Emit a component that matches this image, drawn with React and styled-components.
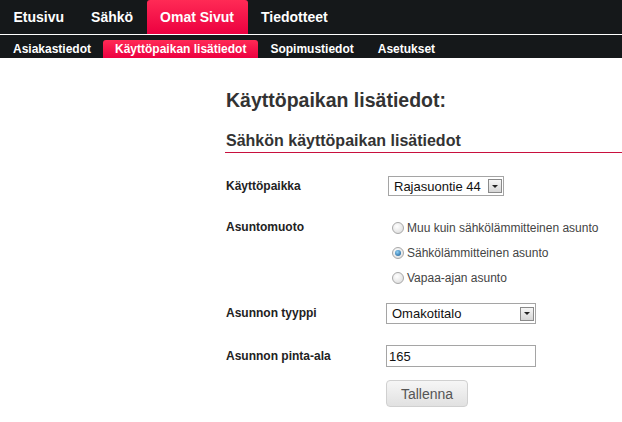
import React from "react";
import styled, { createGlobalStyle } from "styled-components";

const Global = createGlobalStyle`
  body {
    margin: 0;
    background: #fff;
    font-family: "Liberation Sans", Arial, sans-serif;
    color: #333;
  }
`;

const TopBar = styled.div`
  background: #15181a;
  height: 34px;
  display: flex;
  align-items: flex-end;
  border-bottom: 1px solid #fff;
`;

const TopItem = styled.a`
  display: flex;
  align-items: center;
  height: 34px;
  padding: 0 13.5px;
  font-size: 14px;
  font-weight: bold;
  color: #fff;
  text-decoration: none;
  border-radius: 3px 3px 0 0;
  background: ${(p) => (p.$active ? "linear-gradient(#ff2a55, #ec0040)" : "transparent")};
`;

const SubBar = styled.div`
  background: #15181a;
  height: 23px;
  display: flex;
  align-items: flex-end;
  padding-left: 1px;
`;

const SubItem = styled.a`
  display: flex;
  align-items: center;
  height: 18px;
  padding: 0 12px;
  font-size: 12px;
  font-weight: bold;
  color: #fff;
  text-decoration: none;
  border-radius: 3px 3px 0 0;
  background: ${(p) => (p.$active ? "linear-gradient(#ff2a55, #ec0040)" : "transparent")};
`;

const Main = styled.div`
  padding: 31px 0 0 225px;
`;

const Title = styled.h1`
  margin: 0 0 20px 1px;
  font-size: 19.5px;
  font-weight: bold;
  color: #333;
`;

const Section = styled.h2`
  margin: 0;
  padding: 0 0 2px 1px;
  font-size: 16px;
  font-weight: bold;
  color: #333;
  border-bottom: 1px solid #c8103e;
`;

const Form = styled.div`
  display: grid;
  grid-template-columns: 160px 1fr;
  padding: 23px 0 0 1px;
`;

const Label = styled.div`
  font-size: 12px;
  font-weight: bold;
  color: #222;
  padding-top: ${(p) => p.$top || 4}px;
  margin-bottom: ${(p) => p.$gap || 0}px;
`;

const Field = styled.div`
  margin-bottom: ${(p) => p.$gap || 0}px;
`;

const SelectWrap = styled.div`
  position: relative;
  width: ${(p) => p.$w}px;
  height: ${(p) => p.$h}px;
  margin-left: ${(p) => p.$ml || 0}px;
`;

const Select = styled.select`
  appearance: none;
  width: 100%;
  height: 100%;
  box-sizing: border-box;
  border: 1px solid #a5a5a5;
  background: #fff;
  font-family: "Liberation Sans", Arial, sans-serif;
  font-size: 13px;
  color: #111;
  padding: 0 0 0 5px;
  outline: none;
`;

const Arrow = styled.span`
  position: absolute;
  right: 2px;
  top: 50%;
  transform: translateY(-50%);
  width: 14px;
  height: 14px;
  box-sizing: border-box;
  border: 1px solid #8a8a8a;
  background: linear-gradient(#f6f6f6, #d6d6d6);
  display: flex;
  align-items: center;
  justify-content: center;
  pointer-events: none;
  &::after {
    content: "";
    border-left: 3px solid transparent;
    border-right: 3px solid transparent;
    border-top: 3px solid #222;
  }
`;

const Radios = styled.div`
  display: flex;
  flex-direction: column;
  gap: 9px;
  padding: 1px 0 0 5px;
`;

const RadioRow = styled.label`
  display: flex;
  align-items: center;
  gap: 3px;
  font-size: 12px;
  color: #444;
  height: 16px;
`;

const Radio = styled.input`
  appearance: none;
  margin: 0 0 0 1px;
  width: 12px;
  height: 12px;
  border-radius: 50%;
  border: 1px solid #a8a8a8;
  background: radial-gradient(circle at 40% 35%, #fff, #d8d8d8);
  position: relative;
  &:checked::after {
    content: "";
    position: absolute;
    left: 2px;
    top: 2px;
    width: 6px;
    height: 6px;
    border-radius: 50%;
    background: radial-gradient(circle at 40% 35%, #8fd0f5, #10548f);
  }
`;

const Input = styled.input`
  display: block;
  width: 150px;
  height: 22px;
  box-sizing: border-box;
  border: 1px solid #a5a5a5;
  font-family: "Liberation Sans", Arial, sans-serif;
  font-size: 13px;
  color: #111;
  padding: 0 2px;
  outline: none;
`;

const Button = styled.button`
  display: block;
  margin-top: 13px;
  width: 82px;
  height: 27px;
  border: 1px solid #d0d0d0;
  border-radius: 4px;
  background: linear-gradient(#f6f6f6, #e1e1e1);
  font-family: "Liberation Sans", Arial, sans-serif;
  font-size: 14px;
  color: #555;
`;

export default function App() {
  return (
    <>
      <Global />
      <TopBar>
        <TopItem>Etusivu</TopItem>
        <TopItem>Sähkö</TopItem>
        <TopItem $active>Omat Sivut</TopItem>
        <TopItem>Tiedotteet</TopItem>
      </TopBar>
      <SubBar>
        <SubItem>Asiakastiedot</SubItem>
        <SubItem $active>Käyttöpaikan lisätiedot</SubItem>
        <SubItem>Sopimustiedot</SubItem>
        <SubItem>Asetukset</SubItem>
      </SubBar>
      <Main>
        <Title>Käyttöpaikan lisätiedot:</Title>
        <Section>Sähkön käyttöpaikan lisätiedot</Section>
        <Form>
          <Label $top={3} $gap={25}>Käyttöpaikka</Label>
          <Field $gap={23}>
            <SelectWrap $w={116} $h={20} $ml={2}>
              <Select defaultValue="r">
                <option value="r">Rajasuontie 44</option>
              </Select>
              <Arrow />
            </SelectWrap>
          </Field>
          <Label $top={1}>Asuntomuoto</Label>
          <Field $gap={17}>
            <Radios>
              <RadioRow><Radio type="radio" name="a" />Muu kuin sähkölämmitteinen asunto</RadioRow>
              <RadioRow><Radio type="radio" name="a" defaultChecked />Sähkölämmitteinen asunto</RadioRow>
              <RadioRow><Radio type="radio" name="a" />Vapaa-ajan asunto</RadioRow>
            </Radios>
          </Field>
          <Label $top={3}>Asunnon tyyppi</Label>
          <Field $gap={21}>
            <SelectWrap $w={150} $h={21}>
              <Select defaultValue="o">
                <option value="o">Omakotitalo</option>
              </Select>
              <Arrow />
            </SelectWrap>
          </Field>
          <Label $top={4}>Asunnon pinta-ala</Label>
          <Field>
            <Input defaultValue="165" />
            <Button>Tallenna</Button>
          </Field>
        </Form>
      </Main>
    </>
  );
}
